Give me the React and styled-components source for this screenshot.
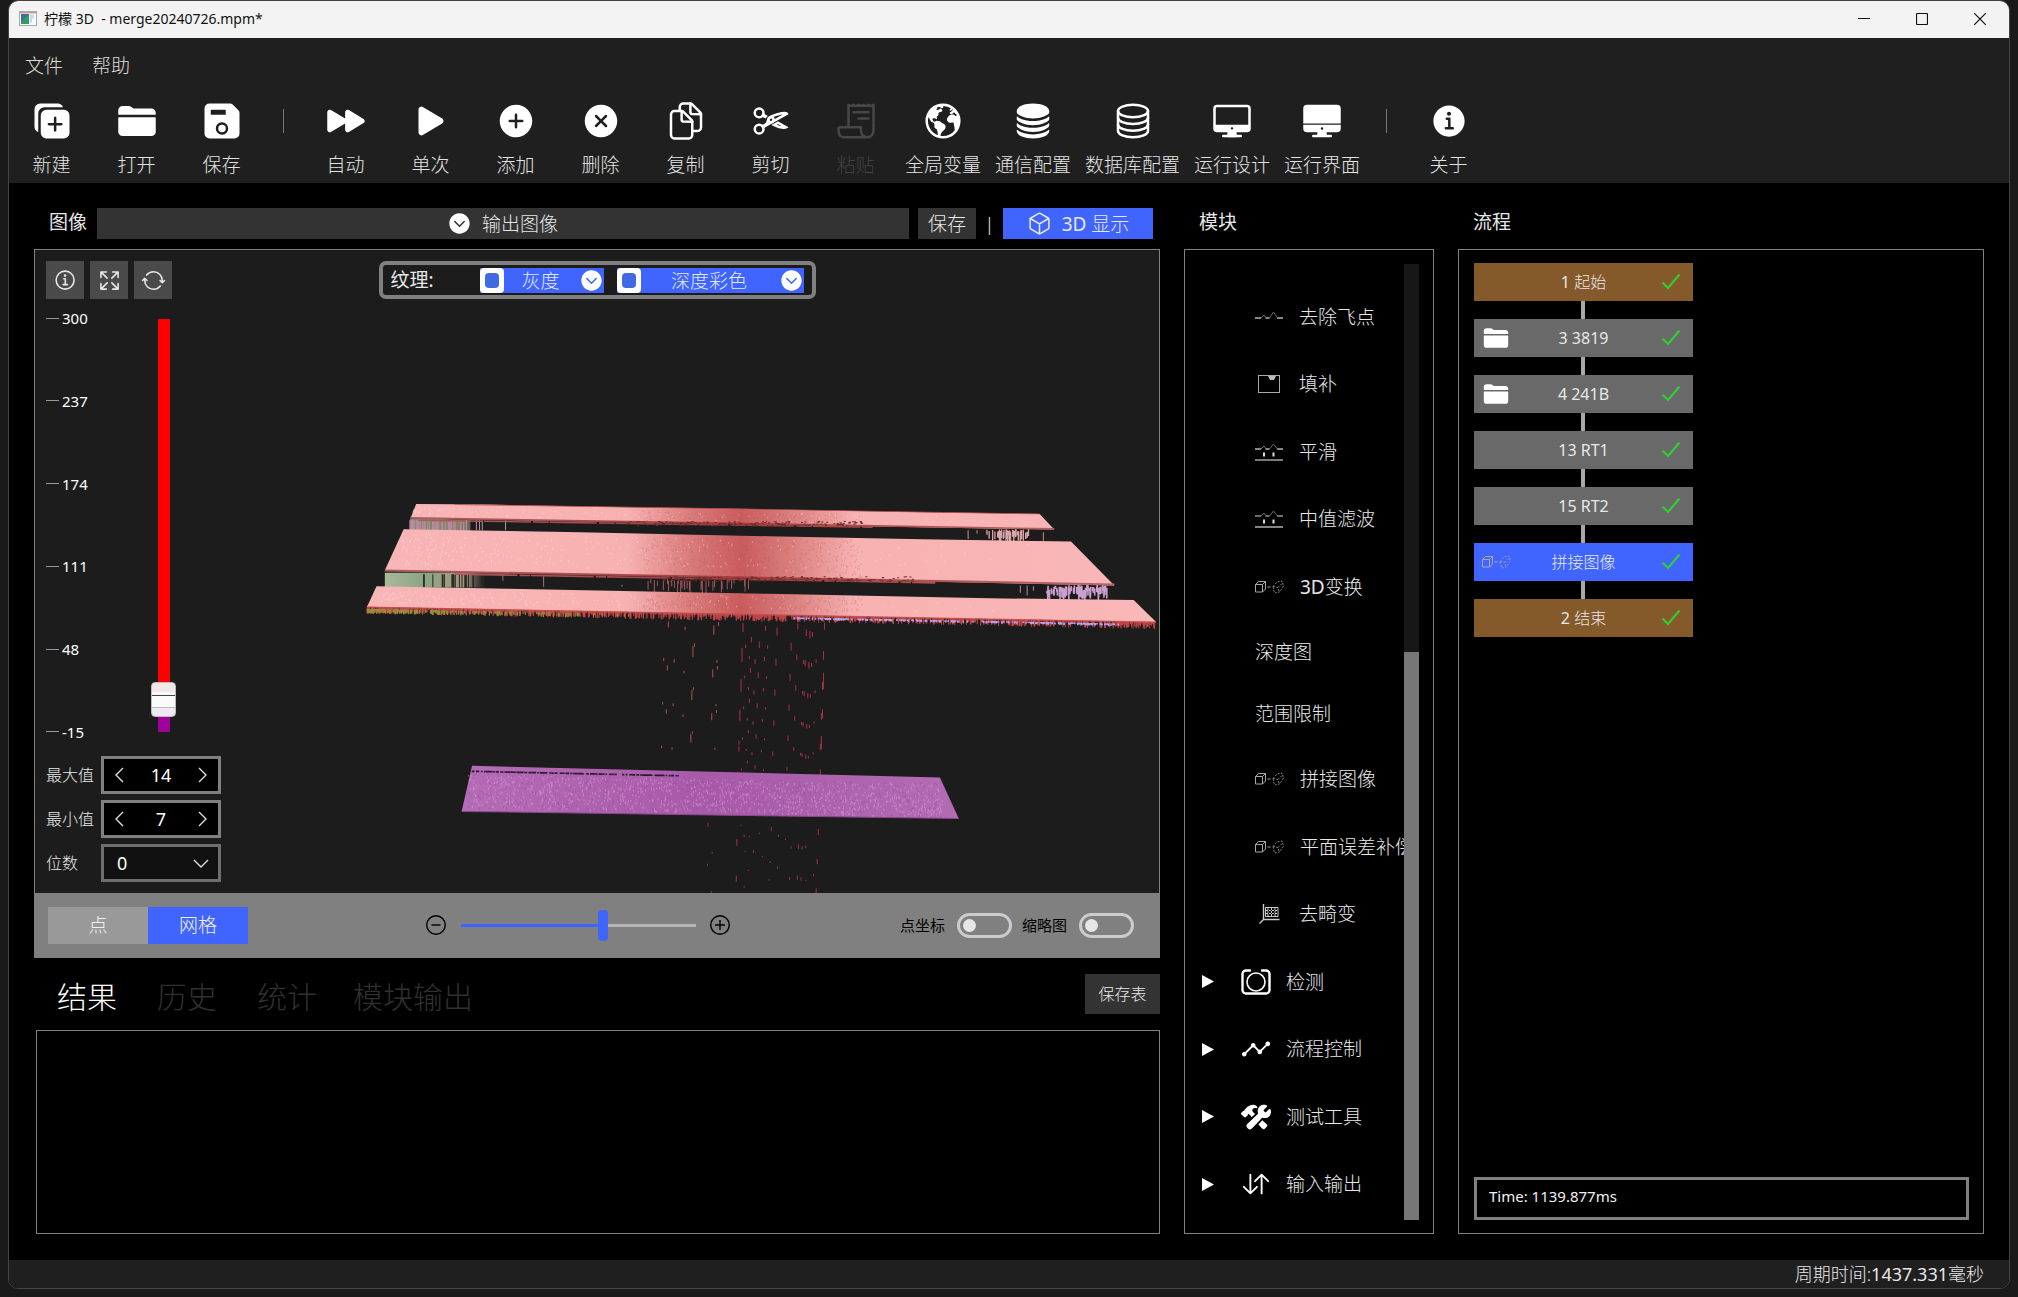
import React, { useState } from "react";
import styled, { createGlobalStyle, css } from "styled-components";
import {
  IoDuplicate, IoFolder, IoSave, IoPlayForward, IoPlay, IoAddCircle, IoCloseCircle,
  IoDocumentsOutline, IoCutOutline, IoReceiptOutline, IoEarth, IoServer, IoServerOutline,
  IoDesktopOutline, IoDesktop, IoInformationCircle, IoInformationCircleOutline,
  IoExpandOutline, IoSyncOutline, IoChevronDownCircle, IoCubeOutline, IoAnalytics,
  IoConstruct, IoSwapVertical,
} from "react-icons/io5";

const c = {
  accent: "#4065ff",
  line: "#808080",
  bar: "#1f1f1f",
  field: "#333333",
  text: "#e8e8e8",
};

const Global = createGlobalStyle`
  * { box-sizing: border-box; }
  body {
    margin: 0;
    background: #1a1a1a;
    color: ${c.text};
    font-family: "Noto Sans", "Noto Sans CJK SC", sans-serif;
    font-size: 19px;
    font-weight: 300;
    line-height: 26px;
  }
  button, input, select { font: inherit; color: inherit; margin: 0; padding: 0; border: 0; background: none; border-radius: 0; }
  ul, ol { list-style: none; margin: 0; padding: 0; }
  h2 { font: inherit; margin: 0; }
  svg { display: block; flex: none; }
`;

const Window = styled.div`
  display: flex;
  flex-direction: column;
  height: calc(100vh - 8px);
  min-height: 900px;
  margin: 0 8px 8px;
  border: 1px solid #444;
  border-radius: 10px;
  overflow: hidden;
  background: #000;
`;

/* Title bar */
const TitleBar = styled.header`
  display: flex;
  align-items: center;
  height: 37px;
  padding: 0 0 2px 10px;
  background: #f3f3f3;
  color: #111;
  font-size: 14px;
  font-weight: 400;
`;
const Caption = styled.span`
  flex: 1;
  padding-left: 7px;
  white-space: pre;
`;
const CaptionButton = styled.button`
  display: grid;
  place-items: center;
  width: 58px;
  height: 35px;
`;

/* Menu and toolbar */
const Menu = styled.nav`
  display: flex;
  gap: 29px;
  padding: 15px 16px 14px;
  background: ${c.bar};
  color: #ddd;
`;
const Toolbar = styled.div`
  display: flex;
  padding: 8px 0 5px;
  background: ${c.bar};
`;
const Tool = styled.button`
  display: flex;
  flex-direction: column;
  align-items: center;
  gap: 11px;
  min-width: 85px;
  padding: 0 7px;
  color: #fff;
  white-space: nowrap;
  &:disabled { color: #474747; }
`;
const ToolLabel = styled.span`
  opacity: 0.88;
`;
const Divider = styled.span`
  width: 1px;
  height: 24px;
  margin: 8px 19px;
  background: #777;
`;

/* Work area */
const Main = styled.main`
  flex: 1;
  min-height: 0;
  display: grid;
  grid-template-columns: minmax(0, 1126fr) 250px minmax(0, 526fr);
  gap: 24px;
  padding: 25px 25px 26px;
`;
const Column = styled.section`
  display: flex;
  flex-direction: column;
  min-height: 0;
  min-width: 0;
`;
const ColumnHead = styled.div`
  display: flex;
  align-items: center;
  height: 31px;
  margin-bottom: 10px;
  padding-left: 15px;
  h2 { margin-bottom: 4px; font-weight: 400; }
`;
const Panel = styled.div`
  flex: 1;
  min-height: 0;
  display: flex;
  border: 1px solid ${c.line};
`;

const ImageSource = styled.label`
  flex: 1;
  display: flex;
  align-items: center;
  justify-content: center;
  gap: 10px;
  height: 31px;
  margin: 0 9px 0 10px;
  background: ${c.field};
  color: #fff;
  select { appearance: none; opacity: 0.88; height: 31px; outline: none; }
`;
const HeadButton = styled.button`
  display: flex;
  align-items: center;
  justify-content: center;
  gap: 10px;
  width: ${(p) => (p.$primary ? 150 : 58)}px;
  height: 31px;
  margin-right: ${(p) => (p.$primary ? 7 : 0)}px;
  background: ${(p) => (p.$primary ? c.accent : c.field)};
`;
const Pipe = styled.span`
  width: 27px;
  text-align: center;
`;
const Latin = styled.b`
  font-weight: 400;
`;

/* 3D viewer */
const Viewer = styled.div`
  flex: 1;
  min-height: 0;
  display: flex;
  flex-direction: column;
  border: 1px solid ${c.line};
  background: #1c1c1c;
`;
const Stage = styled.div`
  position: relative;
  flex: 1;
  min-height: 0;
  display: flex;
  flex-direction: column;
  padding: 11px;
  overflow: hidden;
`;
const Scene = styled.svg`
  position: absolute;
  inset: 0;
  width: 100%;
  height: 100%;
`;
const StageTop = styled.div`
  position: relative;
  display: grid;
  grid-template-columns: 1fr auto 1fr;
`;
const ViewTools = styled.div`
  display: flex;
  gap: 6px;
`;
const ViewTool = styled.button`
  display: grid;
  place-items: center;
  width: 38px;
  height: 38px;
  background: #4a4a4a;
`;
const Texture = styled.div`
  display: flex;
  align-items: center;
  width: 437px;
  height: 38px;
  padding: 0 8px;
  border: 4px solid ${c.line};
  border-radius: 7px;
  background: #1c1c1c;
  font-weight: 400;
  > span { width: 89px; }
`;
const TextureItem = styled.div`
  display: flex;
  flex: none;
  width: ${(p) => p.$width}px;
  height: 25px;
  background: ${c.accent};
  font-weight: 300;
  & + & { margin-left: 13px; }
`;
const TextureCheck = styled.input`
  appearance: none;
  width: 24px;
  height: 25px;
  border: 5px solid #fff;
  border-radius: 4px;
  background: #fff;
  &::before {
    content: "";
    display: block;
    height: 100%;
    border-radius: 4px;
    background: ${(p) => (p.checked ? "#4169e1" : "#ddd")};
  }
`;
const Picker = styled.div`
  position: relative;
  flex: 1;
  display: flex;
  color: #fff;
  select {
    appearance: none;
    width: 100%;
    padding-right: 26px;
    text-align: center;
    text-align-last: center;
    outline: none;
    opacity: 0.85;
  }
  svg { position: absolute; right: 0; top: 0; pointer-events: none; }
`;
const DepthRange = styled.div`
  position: relative;
  flex: 1;
  min-height: 0;
  display: flex;
  margin: 7px 0 12px;
`;
const Scale = styled.ol`
  display: flex;
  flex-direction: column;
  justify-content: space-between;
  width: 105px;
  color: #fff;
  font-size: 15px;
  font-weight: 400;
  line-height: 24px;
  li { display: flex; align-items: center; gap: 3px; }
  li::before { content: ""; width: 13px; height: 1px; background: #999; }
`;
const thumbV = css`
  appearance: none;
  width: 25px;
  height: 35px;
  border: 1px solid #bbb;
  border-radius: 4px;
  background: linear-gradient(#f3e6e6 0 9px, #fafafa 9px 12px, #444 12px 13px, #fafafa 13px 24px, #bbb 24px 25px, #f0e8f4 25px);
`;
const DepthSlider = styled.input`
  appearance: none;
  writing-mode: vertical-lr;
  direction: rtl;
  width: 25px;
  height: calc(100% - 25px);
  margin-top: 13px;
  background: linear-gradient(#f00 0 92%, #a0009c 92%) center / 12px 100% no-repeat;
  outline: none;
  &::-webkit-slider-thumb { ${thumbV} }
`;
const Fields = styled.div`
  position: relative;
  display: grid;
  grid-template-columns: 55px 120px;
  align-items: center;
  row-gap: 6px;
  label { font-size: 16px; }
`;
const Stepper = styled.div`
  display: flex;
  height: 38px;
  border: 3px solid ${c.line};
  background: #000;
  color: #fff;
  font-size: 18px;
  font-weight: 400;
  button { width: 30px; display: grid; place-items: center; }
  input { flex: 1; width: 0; text-align: center; outline: none; }
`;
const DigitSelect = styled.div`
  position: relative;
  display: flex;
  height: 38px;
  border: 3px solid #6e6e6e;
  background: #111;
  color: #fff;
  font-size: 18px;
  font-weight: 400;
  select { appearance: none; width: 100%; padding-left: 13px; outline: none; }
  svg { position: absolute; right: 9px; top: 12px; pointer-events: none; }
`;

const ViewerFoot = styled.div`
  display: grid;
  grid-template-columns: 378fr 304px 404fr;
  align-items: center;
  height: 64px;
  padding: 0 25px 0 13px;
  background: ${c.line};
`;
const Modes = styled.div`
  display: flex;
`;
const Mode = styled.button`
  width: 100px;
  height: 37px;
  background: ${(p) => (p.$active ? c.accent : "#999")};
  color: #f0f0f0;
`;
const Zoom = styled.div`
  display: flex;
  align-items: center;
  justify-content: space-between;
`;
const RoundButton = styled.button`
  width: 20px;
  height: 20px;
`;
const ZoomSlider = styled.input`
  appearance: none;
  width: 235px;
  height: 31px;
  background: linear-gradient(90deg, ${c.accent} 0 61%, #b4b4b4 61%) center / 100% 3px no-repeat;
  outline: none;
  &::-webkit-slider-thumb {
    appearance: none;
    width: 10px;
    height: 31px;
    border-radius: 4px;
    background: ${c.accent};
  }
`;
const Toggles = styled.div`
  display: flex;
  align-items: center;
  justify-content: flex-end;
  gap: 10px;
  color: #000;
  font-size: 15px;
  font-weight: 400;
  label { padding-right: 2px; }
`;
const Toggle = styled.input`
  appearance: none;
  width: 55px;
  height: 25px;
  padding: 3px;
  border: 3px solid #ccc;
  border-radius: 13px;
  &::before {
    content: "";
    display: block;
    width: 13px;
    height: 13px;
    border-radius: 50%;
    background: #e6e6e6;
  }
  &:checked { background: ${c.accent}; }
  &:checked::before { margin-left: auto; }
`;

/* Results */
const TabRow = styled.div`
  display: flex;
  align-items: center;
  height: 72px;
  padding: 0 0 0 23px;
`;
const Tab = styled.button`
  margin-right: ${(p) => p.$gap}px;
  padding-top: 6px;
  font-size: 30px;
  line-height: 40px;
  color: ${(p) => (p.$active ? "#fff" : "#303030")};
`;
const SaveTable = styled.button`
  width: 75px;
  height: 40px;
  margin-left: auto;
  background: ${c.field};
  font-size: 16px;
`;
const ResultBox = styled.div`
  height: 204px;
  margin-left: 2px;
  border: 1px solid ${c.line};
`;

/* Module tree */
const Tree = styled.ul`
  flex: 1;
  min-width: 0;
  display: flex;
  flex-direction: column;
  margin: 33px 0 15px;
  overflow: hidden;
`;
const TreeRow = styled.li`
  flex: ${(p) => (p.$plain ? 25 : 27)} 1 0;
  min-height: 0;
  display: flex;
`;
const TreeButton = styled.button`
  display: flex;
  align-items: center;
  gap: ${(p) => (p.$group ? 15 : 16)}px;
  width: 100%;
  padding-left: ${(p) => (p.$group ? 17 : 70)}px;
  white-space: nowrap;
  text-align: left;
`;
const Arrow = styled.svg`
  margin-right: 12px;
`;
const ScrollTrack = styled.div`
  display: flex;
  flex-direction: column;
  width: 15px;
  margin: 14px 14px 13px 0;
  background: #171717;
  &::before { content: ""; flex: 388; }
`;
const ScrollThumb = styled.div`
  flex: 569;
  background: #777;
`;

/* Flow */
const FlowBody = styled.div`
  flex: 1;
  display: flex;
  flex-direction: column;
  justify-content: space-between;
  padding: 13px 14px 13px 15px;
`;
const nodeColor = { edge: "#845a2b", step: "#696969", active: c.accent };
const Node = styled.button`
  display: grid;
  grid-template-columns: 44px 1fr 44px;
  align-items: center;
  justify-items: center;
  width: 219px;
  height: 38px;
  background: ${(p) => nodeColor[p.$kind]};
  font-size: 16px;
  span { grid-column: 2; }
`;
const NodeItem = styled.li`
  &:not(:last-child)::after {
    content: "";
    display: block;
    width: 4px;
    height: 18px;
    margin-left: 107px;
    background: #a9a9a9;
  }
`;
const TimeBox = styled.output`
  display: block;
  height: 43px;
  padding: 2px 12px;
  border: 3px solid ${c.line};
  color: #f0f0f0;
  font-size: 15px;
  font-weight: 400;
  line-height: 28px;
`;
const StatusBar = styled.footer`
  height: 28px;
  padding-right: 25px;
  background: ${c.bar};
  text-align: right;
  font-size: 18px;
  line-height: 28px;
`;

/* Sets digits and Latin letters in the regular weight beside the light Chinese text */
const Mixed = ({ children }) =>
  children.split(/([A-Za-z0-9.]+(?: [A-Za-z0-9.]+)*)/).map((part, i) => (i % 2 ? <Latin key={i}>{part}</Latin> : part));

/* Drawings */
const Check = () => (
  <svg width="20" height="18" viewBox="0 0 20 18" fill="none" stroke="#32cd32" strokeWidth="2.2">
    <path d="M1.5 9.5 L7 15 L18.5 1.5" />
  </svg>
);
const Chevron = ({ d, w = 10, h = 16 }) => (
  <svg width={w} height={h} viewBox={`0 0 ${w} ${h}`} fill="none" stroke="#ddd" strokeWidth="1.4"><path d={d} /></svg>
);
const Cubes = () => (
  <svg width="29" height="14" viewBox="0 0 29 14" fill="none" stroke="#a8a8a8" strokeWidth="1">
    <path d="M.5 4.5h7v7.5h-7zM.5 4.5l3-3h7l-3 3M10.500 1.500v7.500l-3 3M12.500 7h3" />
    <path d="M18 6.500l4-4.500 5-1 1.500 5-4 6-5 1zM18 6.500l5 1 1 4M23 7.500l5-5" strokeDasharray="2 1.300" strokeOpacity=".75" />
  </svg>
);
const Peaks = ({ lines, bright }) => (
  <svg width="28" height="20" viewBox="0 0 28 20" fill="none" stroke={bright ? "#ddd" : "#888"} strokeWidth={bright ? 1.2 : 1.8}>
    <path d={lines ? "M0 7h6M10.500 7h4M22 7h6" : "M0 11h6M10.500 11h4M22 11h6"} />
    <path d={lines ? "M6 7l3-3 2 3M14.500 7l4-5 4 5" : "M6 11l3-3 2 3M14.500 11l4-6 4 6"} stroke="#666" strokeWidth="1" />
    {lines && <path d="M0 18h28" />}
    {lines && <path d="M9 10.500v4M18.500 10.500v4" stroke="#ddd" strokeWidth="2" />}
  </svg>
);
const Patch = () => (
  <svg width="28" height="20" viewBox="0 0 28 20" fill="none" stroke="#aaa" strokeWidth="1">
    <rect x="3.500" y="1.500" width="21" height="17" />
    <path d="M13 2h8l-2 4h-4z" fill="#bbb" stroke="none" />
  </svg>
);
const Undistort = () => (
  <svg width="28" height="20" viewBox="0 0 28 20" fill="none" stroke="#ccc" strokeWidth="1">
    <path d="M8.500 0v15.500h16M8.500 15.500l-4 4" strokeWidth="1.400" />
    <path d="M10.500 3.500h12.500v9H10.500z" />
    <path d="M13 4v8M16.500 4v8M20 4v8M11 6.500h12M11 9.500h12" strokeDasharray="2 1" />
  </svg>
);
const Inspect = () => (
  <svg width="30" height="26" viewBox="0 0 30 26" fill="none" stroke="#fff" strokeLinecap="round">
    <path d="M9 1.500H5a3.500 3.500 0 0 0-3.500 3.500v16A3.500 3.500 0 0 0 5 24.500h20a3.500 3.500 0 0 0 3.500-3.500V5A3.500 3.500 0 0 0 25 1.500h-4" strokeWidth="2.400" />
    <circle cx="15" cy="13" r="9" strokeWidth="1.600" />
  </svg>
);
const AppIcon = () => (
  <svg width="18" height="15" viewBox="0 0 18 15">
    <rect x=".5" y=".5" width="17" height="14" fill="#fafafa" stroke="#aaa" />
    <rect x="1" y="1" width="16" height="1.500" fill="#c99" />
    <rect x="2" y="3" width="8" height="10" fill="#2e9e62" />
    <path d="M2 3h8L2 11z" fill="#3d6e9e" />
    <path d="M11 3.500h4v4h-2v4h-2z" fill="#c5dde8" />
  </svg>
);

const random = (seed) => () => {
  seed = (seed * 16807) % 2147483647;
  return seed / 2147483647;
};
const streaks = (seed, n, point) => {
  const r = random(seed);
  return Array.from({ length: n }, () => {
    const [x, y, l] = point(r);
    return `M${x.toFixed(1)} ${y.toFixed(1)}v${l.toFixed(1)}`;
  }).join("");
};

const pinkSpeck = streaks(7, 700, (r) => {
  const x = 60 + r() * r() * 1300;
  const band = r();
  if (band < 0.2) return [x + 60, 78 + x * 0.025 + r() * 30, 4];
  if (band < 0.7) return [x + 40, 156 + x * 0.026 + r() * 100, 5];
  return [x, 328 + x * 0.026 + r() * 40, 5];
});
const pinkShade = streaks(11, 900, (r) => {
  const x = 560 + r() * 420;
  const band = r();
  if (band < 0.2) return [x, 80 + x * 0.022 + r() * 30, 4];
  if (band < 0.7) return [x, 156 + x * 0.026 + r() * 110, 5];
  return [x, 328 + x * 0.026 + r() * 45, 5];
});
const purpleSpeck = streaks(23, 1100, (r) => {
  const t = r();
  const k = r();
  return [226 + t * 905 + k * 8, 884 + t * 28 + k * 100, 4 + r() * 4];
});
const purpleDark = streaks(29, 700, (r) => {
  const t = r();
  const k = r();
  return [226 + t * 905, 880 + t * 28 + k * 105, 5];
});
const purpleRim = streaks(31, 200, (r) => {
  const x = 234 + r() * 400;
  return [x, 874 + (x - 234) * 0.034, 5];
});
const fringe = streaks(37, 1100, (r) => {
  const x = 32 + r() * 1508;
  return [x, 378 + (x - 32) * 0.031, 9 + r() * 16];
});
const fringeGold = streaks(41, 260, (r) => {
  const x = 32 + r() * r() * 560;
  return [x, 388 + (x - 32) * 0.031, 5 + r() * 10];
});
const fringeBlue = streaks(43, 240, (r) => {
  const x = 850 + r() * 625;
  return [x, 388 + x * 0.03, 4 + r() * 4];
});
const rightVeil1 = streaks(47, 45, (r) => [1215 + (r() + r()) * 45, 149 + r() * 10, 10 + r() * 24]);
const rightVeil2 = streaks(53, 90, (r) => [1334 + r() * 116, 316 + r() * 18, 8 + r() * 25]);
const midVeil = streaks(59, 34, (r) => [570 + r() * 200, 298 + r() * 8, 8 + r() * 32]);
const leftVeil1 = streaks(61, 60, (r) => [114 + r() * r() * 190, 122, 30]);
const leftVeil2 = streaks(67, 26, (r) => [140 + r() * 118, 284, 42]);
const gapEdge1 = streaks(71, 160, (r) => [530 + r() * 450, 124 + r() * 14, 3]);
const gapEdge2 = streaks(73, 160, (r) => [600 + r() * 480, 290 + r() * 14, 3]);

const drops = [
  [752, 430, 28], [795, 440, 14], [817, 445, 24], [857, 432, 18], [873, 450, 20], [880, 455, 22], [885, 458, 14],
  [908, 430, 20], [768, 473, 16], [783, 486, 20], [757, 496, 10], [799, 498, 10], [844, 490, 24], [906, 515, 26],
  [855, 525, 18], [750, 505, 22], [892, 540, 10], [868, 542, 12], [764, 530, 10], [775, 540, 14],
];
const lowDrops = [
  [748, 1036, 5], [806, 1044, 12], [754, 1066, 8], [764, 1070, 5], [783, 1060, 5], [820, 1066, 8], [833, 1078, 5],
  [858, 1096, 14], [865, 1102, 10], [844, 1102, 7], [872, 1100, 8], [772, 1112, 9], [756, 1115, 5], [789, 1130, 5],
  [804, 1146, 6], [818, 1162, 8], [762, 1172, 4], [887, 1184, 8], [856, 1190, 12], [863, 1195, 10], [841, 1194, 9],
  [802, 1200, 5], [872, 1202, 5], [754, 1220, 6], [693, 1118, 6], [684, 1154, 7],
];
const warmDrops = [[696, 438, 28], [705, 428, 12], [609, 426, 18], [641, 442, 10], [656, 500, 34], [659, 492, 10], [600, 536, 9], [620, 540, 10], [702, 542, 8]];
const repeat = (list, n, step) =>
  Array.from({ length: n }, (_, k) =>
    list.map(([x, y, l]) => `M${x - k * 2} ${y + k * step}v${Math.max(4, l * (1 - k * 0.12))}`).join("")
  ).join("");

const PointCloud = () => (
  <Scene viewBox="0 0 1124 644" preserveAspectRatio="xMidYMid meet" aria-hidden="true">
    <defs>
      <linearGradient id="pink" gradientUnits="userSpaceOnUse" x1="0" x2="1560" y1="0" y2="0">
        <stop offset="0" stopColor="#f9b6b6" /><stop offset=".34" stopColor="#f7b1b1" />
        <stop offset=".42" stopColor="#d97a7a" /><stop offset=".48" stopColor="#c95c5d" />
        <stop offset=".54" stopColor="#da7e7e" /><stop offset=".62" stopColor="#f7b1b1" />
        <stop offset="1" stopColor="#fab8b8" />
      </linearGradient>
      <linearGradient id="edge" gradientUnits="userSpaceOnUse" x1="0" x2="1560" y1="0" y2="0">
        <stop offset="0" stopColor="#a96464" /><stop offset=".48" stopColor="#a83c3e" /><stop offset="1" stopColor="#b86c6c" />
      </linearGradient>
      <linearGradient id="violet" gradientUnits="userSpaceOnUse" x1="213" x2="1165" y1="0" y2="0">
        <stop offset="0" stopColor="#b56cb6" /><stop offset=".5" stopColor="#a75aa8" /><stop offset="1" stopColor="#b36cb4" />
      </linearGradient>
      <linearGradient id="veil" gradientUnits="userSpaceOnUse" x1="66" x2="255" y1="0" y2="0">
        <stop offset="0" stopColor="#a9b898" /><stop offset=".4" stopColor="#8aa682" /><stop offset=".8" stopColor="#a89880" /><stop offset="1" stopColor="#a89880" stopOpacity="0" />
      </linearGradient>
    </defs>
    <g transform="translate(315 230) scale(.523 .3333)" fill="none">
      <path d={repeat(drops, 5, 93)} stroke="#a52f46" strokeWidth="2" />
      <path d={repeat(lowDrops, 1, 0)} stroke="#8d2f58" strokeWidth="2" />
      <path d={repeat(warmDrops, 3, 132)} stroke="#a8504a" strokeWidth="2" />
      <path d="M908 430v20M906 580v50M904 690v28M902 770v40M900 870v20M896 1050v18M894 1140v16M892 1228v16M740 1080v20M739 1190v18M691 1236v8M685 1032v10" stroke="#a52f3e" strokeWidth="2" />

      <path d="M114 118h64l52 4v32H114z" fill="url(#veil)" opacity=".8" />
      <path d={leftVeil1} stroke="#b98a9c" strokeWidth="2" />
      <path d="M66 280h190v44H66z" fill="url(#veil)" />
      <path d={leftVeil2} stroke="#2a2a26" strokeWidth="2" />
      <path d="M292 286v18M370 288v34M520 316v6" stroke="#9c6d72" strokeWidth="2" />
      <path d={rightVeil1} stroke="#dba5a8" strokeWidth="2.500" />
      <path d="M1183 152v26M1200 152v10M1327 158v26" stroke="#c08c8c" strokeWidth="2" />
      <path d={rightVeil2} stroke="#cba0cf" strokeWidth="3" />
      <path d="M1283 318v22M1296 318v30M1308 320v14" stroke="#a98aa8" strokeWidth="2" />
      <path d={midVeil} stroke="#9c555b" strokeWidth="2" />

      <path d="M126 73L265 75L505 82L720 87L1075 97L1320 103L1348 150L115 116z" fill="url(#pink)" />
      <path d="M115 115L1348 148" stroke="url(#edge)" strokeWidth="5" />
      <path d="M130 122L1000 143" stroke="url(#edge)" strokeWidth="4" strokeDasharray="90 4 30 2" />
      <path d="M200 75L505 82L720 87L1075 97L1320 103" stroke="#b84c4e" strokeWidth="2" />
      <path d={gapEdge1} stroke="#6e2c2e" strokeWidth="4" />

      <path d="M102 149L440 158L800 170L1095 179L1380 186L1463 318L66 272z" fill="url(#pink)" />
      <path d="M66 273L1463 315" stroke="url(#edge)" strokeWidth="6" />
      <path d="M200 284L1120 310" stroke="url(#edge)" strokeWidth="5" strokeDasharray="120 4 20 2" />
      <path d={gapEdge2} stroke="#6e2c2e" strokeWidth="4" />

      <path d={fringe} stroke="#bd4446" strokeWidth="2" />
      <path d={fringeGold} stroke="#9c8a3c" strokeWidth="2" />
      <path d={fringeBlue} stroke="#bba0e6" strokeWidth="3" />
      <path d="M50 320L300 328L800 343L1200 356L1500 362L1543 428L32 382z" fill="url(#pink)" />
      <path d="M34 384L1543 429" stroke="#c54c4e" strokeWidth="5" strokeOpacity=".8" />

      <path d={pinkSpeck} stroke="#fde0dc" strokeWidth="2" strokeOpacity=".45" />
      <path d={pinkShade} stroke="#b84a4c" strokeWidth="2" strokeOpacity=".25" />

      <path d="M233 860L1129 895L1165 1018L213 997z" fill="url(#violet)" />
      <path d={purpleDark} stroke="#9c4f9e" strokeWidth="2" strokeOpacity=".6" />
      <path d={purpleSpeck} stroke="#dda0de" strokeWidth="2" strokeOpacity=".5" />
      <path d={purpleRim} stroke="#2b1c2c" strokeWidth="3" />
      <path d="M213 997L1165 1018" stroke="#8e4690" strokeWidth="3" />
    </g>
  </Scene>
);

const tools = [
  ["新建", IoDuplicate], ["打开", IoFolder], ["保存", IoSave], null,
  ["自动", IoPlayForward], ["单次", IoPlay], ["添加", IoAddCircle], ["删除", IoCloseCircle],
  ["复制", IoDocumentsOutline], ["剪切", IoCutOutline], ["粘贴", IoReceiptOutline, true],
  ["全局变量", IoEarth], ["通信配置", IoServer], ["数据库配置", IoServerOutline],
  ["运行设计", IoDesktopOutline], ["运行界面", IoDesktop], null, ["关于", IoInformationCircle],
];

const modules = [
  { name: "去除飞点", icon: <Peaks /> },
  { name: "填补", icon: <Patch /> },
  { name: "平滑", icon: <Peaks lines /> },
  { name: "中值滤波", icon: <Peaks lines bright /> },
  { name: "3D变换", icon: <Cubes /> },
  { name: "深度图" },
  { name: "范围限制" },
  { name: "拼接图像", icon: <Cubes /> },
  { name: "平面误差补偿", icon: <Cubes /> },
  { name: "去畸变", icon: <Undistort /> },
  { name: "检测", icon: <Inspect />, group: true },
  { name: "流程控制", icon: <IoAnalytics size={30} color="#fff" />, group: true },
  { name: "测试工具", icon: <IoConstruct size={30} color="#fff" />, group: true },
  { name: "输入输出", icon: <IoSwapVertical size={30} color="#fff" />, group: true },
];

const nodes = [
  { label: "1 起始", kind: "edge" },
  { label: "3 3819", kind: "step", icon: <IoFolder size={26} color="#fff" /> },
  { label: "4 241B", kind: "step", icon: <IoFolder size={26} color="#fff" /> },
  { label: "13 RT1", kind: "step" },
  { label: "15 RT2", kind: "step" },
  { label: "拼接图像", kind: "active", icon: <Cubes /> },
  { label: "2 结束", kind: "edge" },
];

function NumberField({ id, label, initial }) {
  const [value, setValue] = useState(initial);
  return (
    <>
      <label htmlFor={id}>{label}</label>
      <Stepper>
        <button aria-label={`${label} -`} onClick={() => setValue(+value - 1)}><Chevron d="M9 1L2 8L9 15" /></button>
        <input id={id} value={value} onChange={(e) => setValue(e.target.value)} />
        <button aria-label={`${label} +`} onClick={() => setValue(+value + 1)}><Chevron d="M1 1L8 8L1 15" /></button>
      </Stepper>
    </>
  );
}

function TextureOption({ label, width }) {
  const [on, setOn] = useState(true);
  return (
    <TextureItem $width={width}>
      <TextureCheck type="checkbox" aria-label={label} checked={on} onChange={() => setOn(!on)} />
      <Picker>
        <select aria-label={label}><option>{label}</option></select>
        <IoChevronDownCircle size={25} />
      </Picker>
    </TextureItem>
  );
}

export default function App() {
  const [mode, setMode] = useState("网格");
  const [tab, setTab] = useState("结果");
  return (
    <>
      <Global />
      <Window>
        <TitleBar>
          <AppIcon />
          <Caption>{"柠檬 3D  - merge20240726.mpm*"}</Caption>
          <CaptionButton aria-label="最小化">
            <svg width="12" height="12" stroke="#111"><path d="M0 5.500h12" /></svg>
          </CaptionButton>
          <CaptionButton aria-label="最大化">
            <svg width="12" height="12" stroke="#111" fill="none"><rect x=".5" y=".5" width="11" height="11" rx="1" strokeWidth="1.200" /></svg>
          </CaptionButton>
          <CaptionButton aria-label="关闭">
            <svg width="12" height="12" stroke="#111" strokeWidth="1.200"><path d="M0 0L12 12M12 0L0 12" /></svg>
          </CaptionButton>
        </TitleBar>

        <Menu>
          <button>文件</button>
          <button>帮助</button>
        </Menu>
        <Toolbar>
          {tools.map((t, i) => {
            if (!t) return <Divider key={i} />;
            const [label, Icon, disabled] = t;
            return (
              <Tool key={label} disabled={disabled}>
                <Icon size={40} />
                <ToolLabel>{label}</ToolLabel>
              </Tool>
            );
          })}
        </Toolbar>

        <Main>
          <Column>
            <ColumnHead>
              <h2>图像</h2>
              <ImageSource>
                <IoChevronDownCircle size={25} />
                <select aria-label="图像"><option>输出图像</option></select>
              </ImageSource>
              <HeadButton>保存</HeadButton>
              <Pipe>|</Pipe>
              <HeadButton $primary><IoCubeOutline size={25} /><span><Mixed>3D 显示</Mixed></span></HeadButton>
            </ColumnHead>

            <Viewer>
              <Stage>
                <PointCloud />
                <StageTop>
                  <ViewTools>
                    <ViewTool aria-label="信息"><IoInformationCircleOutline size={25} /></ViewTool>
                    <ViewTool aria-label="全屏"><IoExpandOutline size={25} /></ViewTool>
                    <ViewTool aria-label="刷新"><IoSyncOutline size={25} /></ViewTool>
                  </ViewTools>
                  <Texture>
                    <span>纹理:</span>
                    <TextureOption label="灰度" width={124} />
                    <TextureOption label="深度彩色" width={187} />
                  </Texture>
                </StageTop>
                <DepthRange>
                  <Scale>
                    {[300, 237, 174, 111, 48, -15].map((n) => <li key={n}>{n}</li>)}
                  </Scale>
                  <DepthSlider type="range" aria-label="深度" min="0" max="100" defaultValue="4" />
                </DepthRange>
                <Fields>
                  <NumberField id="max" label="最大值" initial={14} />
                  <NumberField id="min" label="最小值" initial={7} />
                  <label htmlFor="digits">位数</label>
                  <DigitSelect>
                    <select id="digits"><option>0</option></select>
                    <Chevron w={16} h={10} d="M1 1L8 8L15 1" />
                  </DigitSelect>
                </Fields>
              </Stage>
              <ViewerFoot>
                <Modes>
                  {["点", "网格"].map((m) => (
                    <Mode key={m} $active={m === mode} onClick={() => setMode(m)}>{m}</Mode>
                  ))}
                </Modes>
                <Zoom>
                  <RoundButton aria-label="缩小">
                    <svg width="20" height="20" fill="none" stroke="#000" strokeWidth="1.400"><circle cx="10" cy="10" r="9.300" /><path d="M5.500 10h9" /></svg>
                  </RoundButton>
                  <ZoomSlider type="range" aria-label="缩放" min="0" max="100" defaultValue="61" />
                  <RoundButton aria-label="放大">
                    <svg width="20" height="20" fill="none" stroke="#000" strokeWidth="1.400"><circle cx="10" cy="10" r="9.300" /><path d="M5 10h10M10 5v10" /></svg>
                  </RoundButton>
                </Zoom>
                <Toggles>
                  <label htmlFor="coords">点坐标</label>
                  <Toggle id="coords" type="checkbox" />
                  <label htmlFor="thumbs">缩略图</label>
                  <Toggle id="thumbs" type="checkbox" />
                </Toggles>
              </ViewerFoot>
            </Viewer>

            <TabRow>
              {["结果", "历史", "统计", "模块输出"].map((t, i) => (
                <Tab key={t} $gap={i === 2 ? 36 : 40} $active={t === tab} onClick={() => setTab(t)}>{t}</Tab>
              ))}
              <SaveTable>保存表</SaveTable>
            </TabRow>
            <ResultBox />
          </Column>

          <Column>
            <ColumnHead><h2>模块</h2></ColumnHead>
            <Panel>
              <Tree>
                {modules.map((m) => (
                  <TreeRow key={m.name} $plain={!m.icon}>
                    <TreeButton $group={m.group}>
                      {m.group && <Arrow width="12" height="13" viewBox="0 0 12 13" fill="#fff"><path d="M0 0L12 6.500L0 13z" /></Arrow>}
                      {m.icon}
                      <span><Mixed>{m.name}</Mixed></span>
                    </TreeButton>
                  </TreeRow>
                ))}
              </Tree>
              <ScrollTrack><ScrollThumb /></ScrollTrack>
            </Panel>
          </Column>

          <Column>
            <ColumnHead><h2>流程</h2></ColumnHead>
            <Panel>
              <FlowBody>
                <ol>
                  {nodes.map((n) => (
                    <NodeItem key={n.label}>
                      <Node $kind={n.kind}>{n.icon}<span><Mixed>{n.label}</Mixed></span><Check /></Node>
                    </NodeItem>
                  ))}
                </ol>
                <TimeBox>Time: 1139.877ms</TimeBox>
              </FlowBody>
            </Panel>
          </Column>
        </Main>

        <StatusBar><Mixed>周期时间:1437.331毫秒</Mixed></StatusBar>
      </Window>
    </>
  );
}
